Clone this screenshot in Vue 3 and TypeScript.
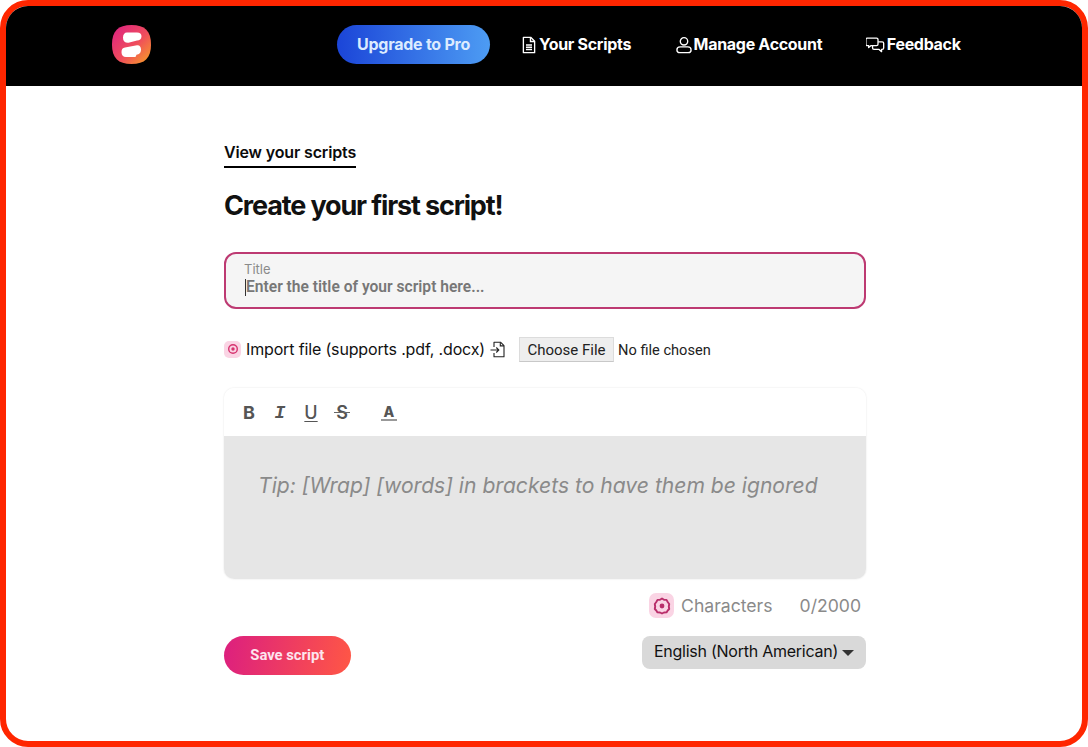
<script setup lang="ts">
const tools = ['B', 'I', 'U', 'S']
</script>

<template>
  <div class="frame">
    <header class="topbar">
      <svg class="logo" width="39" height="39" viewBox="0 0 39 39">
        <defs>
          <linearGradient id="logoGrad" x1="0" y1="0" x2="1" y2="1">
            <stop offset="0" stop-color="#dc1f84" />
            <stop offset="0.55" stop-color="#ef4d5c" />
            <stop offset="1" stop-color="#f9a423" />
          </linearGradient>
        </defs>
        <path d="M19.500 0C33 0 39 6 39 19.500S33 39 19.500 39 0 33 0 19.500 6 0 19.500 0Z" fill="url(#logoGrad)" />
        <path d="M15 7.500h10c3 0 4.500 1.300 4.500 3.800 0 3-2 4-4.500 4.300l-8.500 2.200c-3.300.3-5.500-1.500-5.500-5 0-3.300 1.500-5.300 4-5.300Z" fill="#fff" />
        <path d="M13 22.500l12-2.300c2.500-.3 4 1.300 4 4.300 0 3.500-2 5-4.500 5.200l-1 2.300H14c-2.800 0-4.500-1.800-4.500-4.800 0-3 1.200-4.400 3.500-4.700Z" fill="#fff" />
      </svg>
      <nav class="nav">
        <a class="upgrade">Upgrade to Pro</a>
        <a class="nav-link">
          <svg width="18" height="18" viewBox="0 0 16 16" fill="none" stroke="#fff" stroke-width="1.200">
            <path d="M3 1.200h6.500L13 4.700v10.100H3Z" stroke-linejoin="round" />
            <path d="M9.300 1.400v3.500H13M5.300 8h5.400M5.300 10h5.400M5.300 12h5.400" />
          </svg>
          Your Scripts
        </a>
        <a class="nav-link">
          <svg width="18" height="18" viewBox="0 0 16 16" fill="none" stroke="#fff" stroke-width="1.200">
            <circle cx="8" cy="4.700" r="3.300" />
            <path d="M4.500 9.700h7c1.700 0 2.800 1.200 2.800 2.700 0 1.500-1 2.400-2.500 2.400H4.200c-1.500 0-2.500-.9-2.500-2.400 0-1.500 1.100-2.700 2.800-2.700Z" />
          </svg>
          Manage Account
        </a>
        <a class="nav-link">
          <svg width="20" height="18" viewBox="1 0 18 16" fill="none" stroke="#fff" stroke-width="1.200" stroke-linejoin="round">
            <path d="M2.200 1.800h8.300c.8 0 1.300.5 1.300 1.200v4.300c0 .8-.5 1.300-1.300 1.300H5.300L3.400 10.300V8.600H2.200c-.8 0-1.300-.5-1.300-1.300V3c0-.7.500-1.200 1.300-1.200Z" />
            <path d="M11.800 5.200h3.800c.8 0 1.300.5 1.300 1.200v4.300c0 .8-.5 1.300-1.300 1.300h-.6v2l-2.200-2H8.200c-.8 0-1.300-.5-1.300-1.300V8.600" />
          </svg>
          Feedback
        </a>
      </nav>
    </header>

    <main class="content">
      <div class="tabs"><span class="tab">View your scripts</span></div>
      <h1 class="heading">Create your first script!</h1>

      <div class="title-box">
        <div class="title-label">Title</div>
        <div class="title-input"><span class="caret"></span>Enter the title of your script here...</div>
      </div>

      <div class="import-row">
        <span class="badge small">
          <svg width="12" height="12" viewBox="0 0 12 12">
            <circle cx="6" cy="6" r="4.300" fill="none" stroke="#d6336f" stroke-width="1.400" />
            <circle cx="6" cy="6" r="1.700" fill="#d6336f" />
          </svg>
        </span>
        <span class="import-text">Import file (supports .pdf, .docx)</span>
        <svg class="import-icon" width="16" height="17" viewBox="0 0 16 17" fill="none" stroke="#222" stroke-width="1.100">
          <path d="M4 6V1.200h6.500L14 4.700v11H4V12" stroke-linejoin="round" />
          <path d="M10.300 1.400v3.500H14M.5 9h8.300M6.300 6.500 8.800 9l-2.500 2.500" />
        </svg>
        <span class="file-btn">Choose File</span>
        <span class="file-none">No file chosen</span>
      </div>

      <section class="editor">
        <div class="toolbar">
          <span v-for="t in tools" :key="t" class="tool" :class="'tool-' + t">{{ t }}</span>
          <span class="tool tool-color">A</span>
        </div>
        <div class="editor-body">Tip: [Wrap] [words] in brackets to have them be ignored</div>
      </section>

      <div class="counter">
        <span class="badge large">
          <svg width="18" height="18" viewBox="0 0 18 18">
            <path d="M9 1.500 11 2.700 13.500 2.900 14.700 5 16.200 7 15.800 9.500 16.200 12 14.700 13.500 13.500 15.400 11 15.500 9 16.500 7 15.500 4.500 15.400 3.300 13.500 1.800 12 2.200 9.500 1.800 7 3.300 5 4.500 2.900 7 2.700Z" fill="none" stroke="#b92e6a" stroke-width="1.900" stroke-linejoin="round" />
            <circle cx="9" cy="9" r="2.400" fill="#b92e6a" />
          </svg>
        </span>
        <span class="counter-label">Characters</span>
        <span class="counter-value">0/2000</span>
      </div>

      <div class="actions">
        <button class="save">Save script</button>
        <div class="lang">English (North American)<span class="arrow"></span></div>
      </div>
    </main>
  </div>
</template>

<style>
html, body { margin: 0; background: #fff; }
</style>

<style scoped>
.frame {
  box-sizing: border-box;
  width: 1088px;
  height: 747px;
  border: 6px solid #ff2600;
  border-radius: 28px;
  overflow: hidden;
  background: #fff;
  font-family: Inter, "Liberation Sans", sans-serif;
}
.topbar {
  display: flex;
  align-items: center;
  height: 80px;
  padding-left: 106px;
  background: #000;
  box-sizing: border-box;
}
.logo { display: block; margin-top: -3px; }
.nav {
  display: flex;
  align-items: center;
  margin-left: 186px;
  margin-top: -3px;
}
.upgrade {
  box-sizing: border-box;
  display: flex;
  align-items: center;
  justify-content: center;
  width: 153px;
  height: 39px;
  padding-bottom: 2px;
  border-radius: 20px;
  background: linear-gradient(90deg, #1b45d8, #4d9cf3);
  color: #dcebff;
  font-weight: 700;
  font-size: 16px;
  letter-spacing: -0.25px;
}
.nav-link {
  display: flex;
  align-items: center;
  gap: 1px;
  padding-bottom: 2px;
  color: #fff;
  font-weight: 700;
  font-size: 16px;
  letter-spacing: -0.3px;
  margin-left: 30px;
}
.nav-link + .nav-link { margin-left: 43.5px; }
.nav-link svg { margin-top: 2px; }
.content {
  width: 642px;
  margin-left: 218px;
  padding-top: 56px;
}
.tabs { display: flex; }
.tab {
  font-size: 16px;
  font-weight: 600;
  line-height: 20px;
  padding-bottom: 4px;
  color: #0b0b0b;
  border-bottom: 2px solid #000;
  letter-spacing: -0.15px;
}
.heading {
  margin: 21px 0 29px;
  font-size: 27px;
  line-height: 34px;
  font-weight: 700;
  letter-spacing: -1.15px;
  color: #111;
}
.title-box {
  box-sizing: border-box;
  height: 57px;
  border: 2px solid #bd3a72;
  border-radius: 12px;
  background: #f5f5f5;
  padding: 8px 18px 0;
}
.title-label {
  font-size: 13px;
  line-height: 15px;
  color: #8a8a8a;
}
.title-input {
  display: flex;
  align-items: center;
  font-family: Roboto, sans-serif;
  font-size: 15.6px;
  font-weight: 600;
  line-height: 20px;
  color: #777;
  padding-left: 2px;
}
.caret {
  width: 1px;
  height: 17px;
  background: #333;
  margin-left: -1px;
}
.import-row {
  display: flex;
  align-items: center;
  height: 26px;
  margin-top: 27px;
  font-size: 16px;
  letter-spacing: -0.15px;
  color: #111;
}
.badge {
  display: flex;
  align-items: center;
  justify-content: center;
  background: #fad4e4;
  border-radius: 5px;
}
.badge.small { width: 17px; height: 17px; margin-right: 5px; }
.badge.large { width: 25px; height: 25px; border-radius: 7px; }
.import-text { white-space: nowrap; }
.import-icon { margin-left: 5px; }
.file-btn {
  box-sizing: border-box;
  display: flex;
  align-items: center;
  justify-content: center;
  width: 95px;
  height: 25px;
  padding-top: 1px;
  margin-left: 13px;
  background: #eeeeee;
  border: 1px solid #dcdcdc;
  border-bottom-color: #c8c8c8;
  font-family: Roboto, sans-serif;
  font-size: 15px;
  letter-spacing: 0;
  color: #222;
}
.file-none {
  margin-left: 4px;
  padding-top: 2px;
  font-family: Roboto, sans-serif;
  font-size: 14.6px;
  letter-spacing: 0;
  color: #222;
}
.editor {
  margin-top: 26px;
  border-radius: 10px;
  overflow: hidden;
  box-shadow: 0 0 2px rgba(0, 0, 0, 0.12);
}
.toolbar {
  box-sizing: border-box;
  display: flex;
  align-items: center;
  height: 48px;
  padding: 1px 0 0 18px;
  background: #fff;
}
.tool {
  position: relative;
  width: 14px;
  margin-right: 17px;
  text-align: center;
  font-size: 18px;
  line-height: 20px;
  font-weight: 700;
  color: #555;
}
.tool-I { font-family: "Liberation Mono", monospace; font-style: italic; }
.tool-U { text-decoration: underline; text-underline-offset: 2px; font-weight: 500; }
.tool-S { font-weight: 600; }
.tool-S::after {
  content: "";
  position: absolute;
  left: -1px;
  right: -1px;
  top: 9px;
  height: 1.5px;
  background: #666;
}
.tool-color {
  margin-left: 15px;
  margin-right: 0;
  width: 16px;
  font-size: 14px;
  font-weight: 800;
  border-bottom: 2px solid #999;
  line-height: 15px;
}
.editor-body {
  box-sizing: border-box;
  height: 143px;
  padding: 36px 34px 0;
  background: #e6e6e6;
  font-size: 21.1px;
  line-height: 28px;
  font-style: italic;
  color: #8a8a8a;
  white-space: nowrap;
}
.counter {
  display: flex;
  align-items: center;
  justify-content: flex-end;
  height: 25px;
  margin-top: 14px;
  padding-right: 5px;
  font-size: 17.6px;
  color: #8a8a8a;
}
.counter-label { margin-left: 7px; }
.counter-value { margin-left: 27px; }
.actions {
  display: flex;
  justify-content: space-between;
  align-items: flex-start;
  margin-top: 18px;
}
.save {
  width: 126.5px;
  height: 39px;
  border: none;
  border-radius: 20px;
  padding: 0 0 2px;
  background: linear-gradient(100deg, #dc1f7f, #ff5745);
  color: #fde4ee;
  font-family: Roboto, sans-serif;
  font-size: 14.8px;
  font-weight: 700;
}
.lang {
  box-sizing: border-box;
  display: flex;
  align-items: center;
  height: 33px;
  padding: 0 12px 3px;
  border-radius: 8px;
  background: #d9d9d9;
  color: #111;
  font-size: 16px;
  letter-spacing: -0.25px;
}
.arrow {
  width: 0;
  height: 0;
  margin-left: 4px;
  margin-top: 3px;
  border: 6px solid transparent;
  border-top-color: #333;
  border-bottom-width: 0;
}
</style>
